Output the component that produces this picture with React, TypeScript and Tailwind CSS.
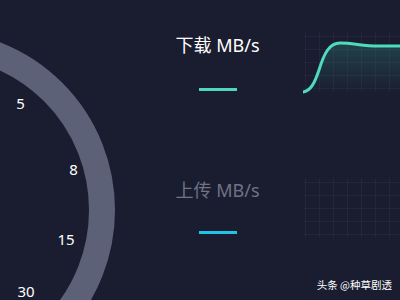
import React from "react";

const Grid = ({ color }: { color: string }) => {
  const v = [2, 16, 30, 44, 58, 72, 86];
  const h = [4, 17, 30, 43, 56];
  return (
    <g stroke={color} strokeWidth={1}>
      {v.map((x) => (
        <line key={"v" + x} x1={x + 0.5} y1={0} x2={x + 0.5} y2={60} />
      ))}
      {h.map((y) => (
        <line key={"h" + y} x1={0} y1={y + 0.5} x2={97} y2={y + 0.5} />
      ))}
    </g>
  );
};

export default function App() {
  const font = { fontFamily: '"Noto Sans", "Noto Sans CJK SC", sans-serif' };
  return (
    <div
      className="w-[400px] h-[300px] bg-[#1a1d2f] flex overflow-hidden relative"
      style={font}
    >
      {/* gauge */}
      <div className="w-[170px] h-[300px] shrink-0">
        <svg width="170" height="300" viewBox="0 0 170 300">
          <circle cx={-65} cy={210} r={167} fill="none" stroke="#5c6178" strokeWidth={26} />
          <g fill="#ffffff" fontSize="15" textAnchor="middle" dominantBaseline="central" fontFamily='"Noto Sans", sans-serif'>
            <text x={20.5} y={102.5}>5</text>
            <text x={73.5} y={168.5}>8</text>
            <text x={66} y={238.5}>15</text>
            <text x={26} y={291}>30</text>
          </g>
        </svg>
      </div>

      {/* labels */}
      <div className="w-[95px] shrink-0 flex flex-col items-center">
        <div className="mt-[33px] h-[24px] leading-[24px] text-[18px] text-white whitespace-nowrap">下载 MB/s</div>
        <div className="mt-[31px] w-[38px] h-[3px] bg-[#4fd6bb]" />
        <div className="mt-[87px] h-[24px] leading-[24px] text-[18px] text-[#6f7385] whitespace-nowrap">上传 MB/s</div>
        <div className="mt-[29px] w-[38px] h-[3px] bg-[#1ec6e6]" />
      </div>

      {/* charts */}
      <div className="flex-1 flex flex-col pl-[38px]">
        <svg className="mt-[32px]" width="97" height="62" viewBox="0 0 97 62">
          <defs>
            <linearGradient id="fillg" x1="0" y1="0" x2="0" y2="1">
              <stop offset="0" stopColor="#3fd4b4" stopOpacity="0.2" />
              <stop offset="1" stopColor="#3fd4b4" stopOpacity="0" />
            </linearGradient>
          </defs>
          <Grid color="rgba(120,80,130,0.12)" />
          <path
            d="M0 60 C 8 59, 12 50, 16 38 C 21 22, 26 11, 37 11 C 50 11, 60 14, 75 14 L 97 14 L 97 62 L 0 62 Z"
            fill="url(#fillg)"
          />
          <path
            d="M0 60 C 8 59, 12 50, 16 38 C 21 22, 26 11, 37 11 C 50 11, 60 14, 75 14 L 97 14"
            fill="none"
            stroke="#4fdcbc"
            strokeWidth={3}
            strokeLinecap="round"
          />
        </svg>
        <svg className="mt-[84px]" width="97" height="60" viewBox="0 0 97 60">
          <Grid color="rgba(110,110,150,0.11)" />
        </svg>
      </div>

      <div
        className="absolute right-[8px] bottom-[8px] text-[10.5px] leading-[14px] text-white whitespace-nowrap"
        style={{ fontFamily: '"Noto Sans CJK SC", sans-serif' }}
      >
        头条 @种草剧透
      </div>
    </div>
  );
}
